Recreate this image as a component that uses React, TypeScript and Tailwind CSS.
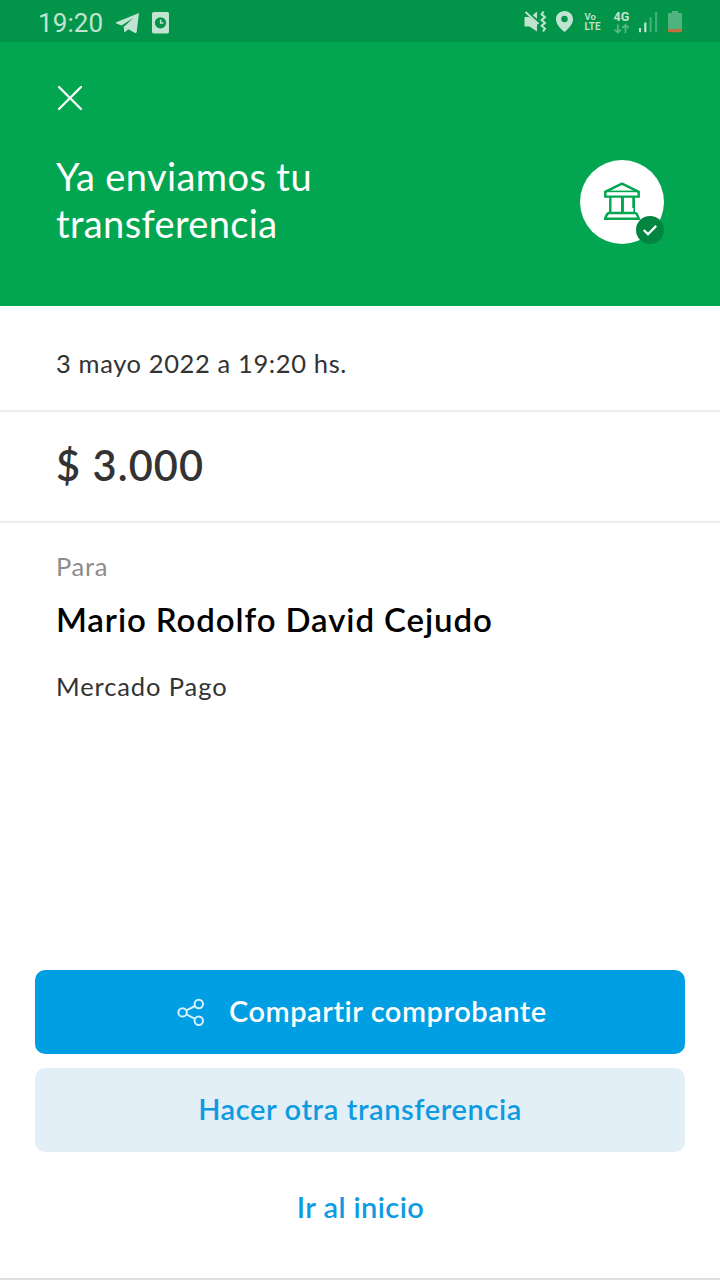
import React from "react";

const StatusBar: React.FC = () => {
  return (
    <div className="flex h-[42px] items-center justify-between bg-[#029549] pl-[38px] pr-[37px] text-[#c0e4d1]">
      <div className="flex items-center">
        <span className="w-[66px] whitespace-nowrap font-['Roboto',sans-serif] text-[26px] leading-[42px] tracking-[0.1px] pt-[3px]">
          19:20
        </span>
        <svg className="ml-[11px] mt-[3px]" width="25" height="22" viewBox="0 0 25 22">
          <path
            d="M24 1 L1.2 10.3 Q0.5 10.9 1.3 11.4 L6.6 13.4 L18.2 6 L9 14.8 L20 21 Q21.3 21.4 21.7 20 Z"
            fill="currentColor"
          />
          <path d="M8.6 14 L14 16.8 L9.4 20.4 Z" fill="currentColor" />
        </svg>
        <svg className="ml-[12px] mt-[3px]" width="17" height="22" viewBox="0 0 17 22">
          <rect width="17" height="21.4" rx="1.6" fill="currentColor" />
          <circle cx="8.5" cy="10.8" r="5.6" fill="#029549" />
          <path d="M8.6 7.4 V11 H11.4" fill="none" stroke="currentColor" strokeWidth="1.5" />
        </svg>
      </div>
      <svg width="160" height="42" viewBox="523 0 160 42">
        {/* muted, vibrating */}
        <path d="M524.5 17 H529 L537 23 V31.5 L529.5 26.5 H524.5 Z" fill="currentColor" />
        <path d="M532.6 15.2 L537 11.5 V18.7 Z" fill="currentColor" />
        <path d="M525.5 12 L538.5 24" stroke="currentColor" strokeWidth="1.9" />
        <path
          d="M543.6 11.5 L541.6 14.3 L545 17.2 L541.6 20 L545 23 L541.6 25.8 L545 28.6 L543 31.5"
          fill="none"
          stroke="currentColor"
          strokeWidth="2"
        />
        {/* location */}
        <path
          d="M564.5 11 C569.5 11 573 14.6 573 19.3 C573 24.8 567.5 29.5 564.5 32 C561.5 29.5 556 24.8 556 19.3 C556 14.6 559.5 11 564.5 11 Z M564.5 15.8 A3.2 3.2 0 1 0 564.5 22.2 A3.2 3.2 0 1 0 564.5 15.8 Z"
          fill="currentColor"
          fillRule="evenodd"
        />
        <text x="584.5" y="20.4" fontSize="9.5" fontWeight="600" fontFamily="Roboto, sans-serif" fill="currentColor">
          Vo
        </text>
        <text x="584.5" y="30" fontSize="10" fontWeight="600" fontFamily="Roboto, sans-serif" fill="currentColor">
          LTE
        </text>
        <text x="613.5" y="20.8" fontSize="12.5" fontWeight="700" fontFamily="Roboto, sans-serif" fill="currentColor">
          4G
        </text>
        <g fill="none" stroke="#58b786" strokeWidth="1.8">
          <path d="M617.8 24.5 V32.5 M614.6 29.6 L617.8 32.6 L621 29.6" />
          <path d="M625.5 33 V25 M622.3 28 L625.5 25 L628.7 28" />
        </g>
        {/* signal */}
        <rect x="639" y="28" width="2" height="4.2" fill="currentColor" />
        <rect x="644.2" y="22.5" width="2.2" height="9.7" fill="currentColor" />
        <rect x="649.5" y="17" width="2.2" height="15.2" fill="#45ae78" />
        <rect x="655" y="12" width="2.2" height="20.2" fill="#45ae78" />
        {/* battery */}
        <path d="M668 14 Q668 13 669 13 H672 V11 H678 V13 H681 Q682 13 682 14 V29 H668 Z" fill="#4fb380" />
        <path d="M668 29 H682 V31.5 Q682 32.3 681.2 32.3 H668.8 Q668 32.3 668 31.5 Z" fill="#c1703c" />
      </svg>
    </div>
  );
};

const BankBadge: React.FC = () => {
  return (
    <div className="relative size-[84px] rounded-full bg-white">
      <svg width="84" height="84" viewBox="0 0 84 84" fill="none" stroke="#02a650" strokeWidth="2.4">
        <path d="M25.3 36.6 V31.8 L42 23.6 L58.7 31.8 V36.6 Z" />
        <path d="M26 31.4 H58" strokeWidth="1.6" />
        <path d="M30.3 37 V53 M42.2 37 V53 M53.5 37 V48" />
        <path d="M54.2 37 V53" strokeWidth="1.6" />
        <path d="M42.6 37 V53" strokeWidth="2.6" />
        <path d="M28.5 53 H55.5 Q57.5 54 58.8 58.8 H25.2 Q26.2 54.5 28.5 53 Z" />
      </svg>
      <div className="absolute bottom-0 right-0 flex size-7 items-center justify-center rounded-full bg-[#018541]">
        <svg width="16" height="16" viewBox="0 0 16 16" fill="none" stroke="#fff" strokeWidth="2.3">
          <path d="M1.8 8 L6 12.2 L14.2 3.9" />
        </svg>
      </div>
    </div>
  );
};

const ShareIcon: React.FC = () => {
  return (
    <svg width="28" height="30" viewBox="0 0 28 30" fill="none" stroke="#d9f1fc" strokeWidth="2">
      <circle cx="5.6" cy="15.4" r="4.2" />
      <circle cx="21.8" cy="7" r="4.2" />
      <circle cx="21.8" cy="23.8" r="4.2" />
      <path d="M9.4 13.4 L18 9 M9.4 17.4 L18 21.8" />
    </svg>
  );
};

export default function App() {
  return (
    <div className="flex h-[1280px] w-[720px] flex-col overflow-hidden border-b-2 border-[#dedede] bg-white font-['Lato',sans-serif]">
      <StatusBar />
      <header className="h-[264px] bg-[#02a650] px-14 pt-[42px] text-white">
        <button className="block" aria-label="Cerrar">
          <svg width="28" height="28" viewBox="0 0 28 28" stroke="#fff" strokeWidth="2.3" strokeLinecap="round">
            <path d="M3 3 L25 25 M25 3 L3 25" />
          </svg>
        </button>
        <div className="mt-[41px] flex items-start justify-between">
          <h1 className="text-[38px] font-normal leading-[47px]">
            <span className="block tracking-[0.4px]">Ya enviamos tu</span>
            <span className="block tracking-[0.35px]">transferencia</span>
          </h1>
          <div className="mt-[7px]">
            <BankBadge />
          </div>
        </div>
      </header>

      <main className="text-[#333]">
        <p className="h-[106px] border-b-2 border-[#ededed] px-14 pt-[41px] text-[25.5px] leading-8 tracking-[0.62px]">
          3 mayo 2022 a 19:20 hs.
        </p>
        <p className="h-[111px] border-b-2 border-[#ededed] px-14 pt-[28px] text-[41.5px] font-semibold leading-[50px] tracking-[1.1px]">
          $ 3.000
        </p>
        <div className="px-14 pt-[27px]">
          <p className="text-[25.5px] leading-8 tracking-[0.7px] text-[#8c8c8c]">Para</p>
          <h2 className="mt-[17px] text-[33px] font-semibold leading-10 tracking-[0.9px] text-black">
            Mario Rodolfo David Cejudo
          </h2>
          <p className="mt-[31px] text-[25.5px] leading-8 tracking-[0.9px]">Mercado Pago</p>
        </div>
      </main>

      <footer className="mt-auto flex flex-col gap-[14px] px-[35px] pb-7 text-[29px] font-semibold leading-9">
        <button className="flex h-[84px] items-center rounded-[10px] bg-[#009ee3] pl-[142px] text-white">
          <ShareIcon />
          <span className="ml-6 pb-[3px] tracking-[0.53px]">Compartir comprobante</span>
        </button>
        <button className="h-[84px] rounded-[10px] bg-[#e2eff7] pb-[3px] tracking-[0.6px] text-[#0f9bdf]">
          Hacer otra transferencia
        </button>
        <button className="h-[84px] pb-[3px] pl-px tracking-[0.4px] text-[#0f9bdf]">Ir al inicio</button>
      </footer>
    </div>
  );
}
